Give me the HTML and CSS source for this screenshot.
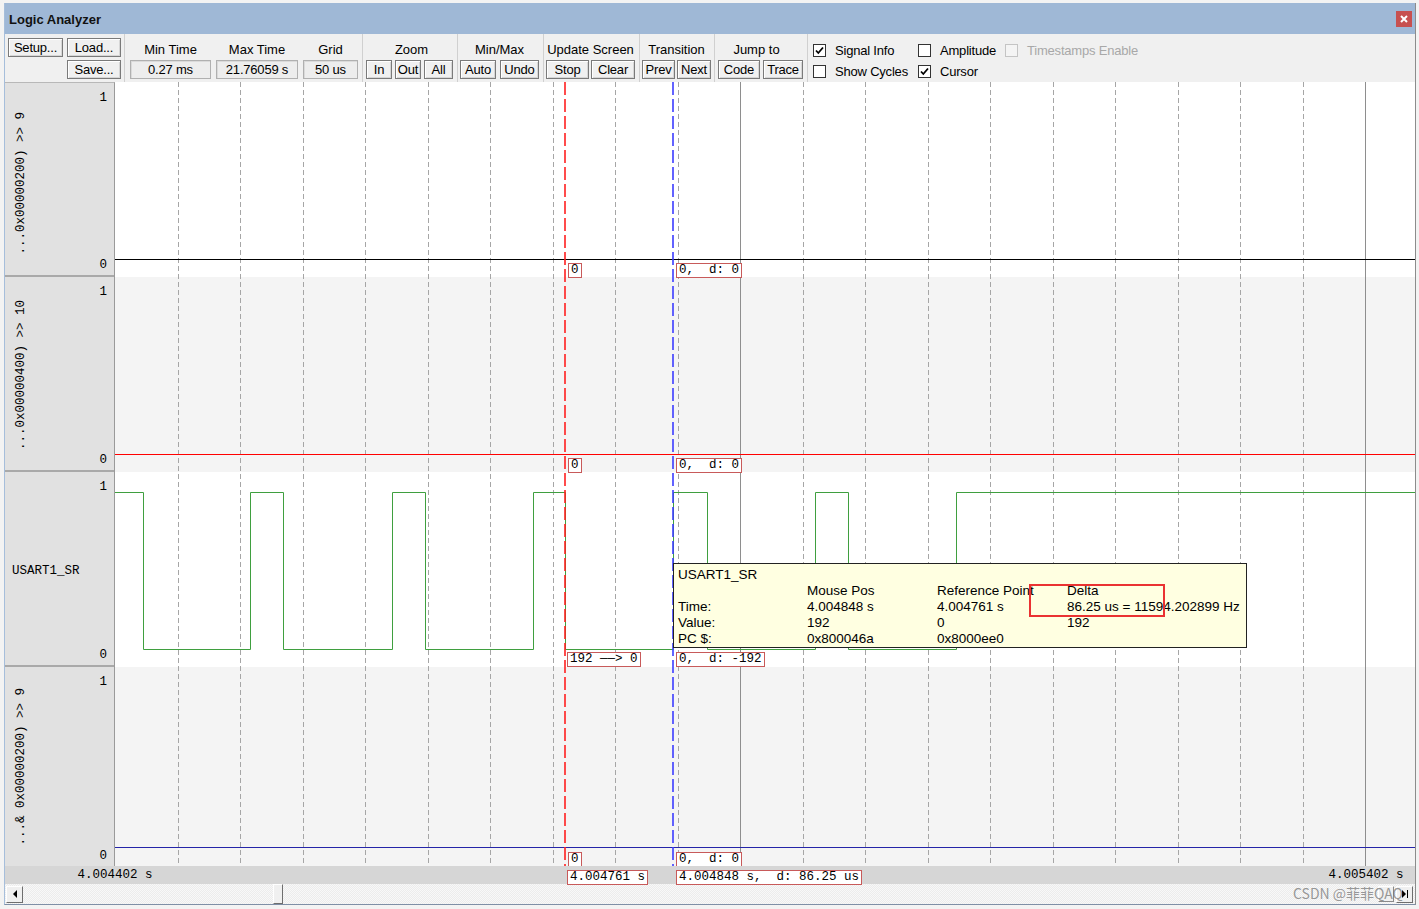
FILE: index.html
```html
<!DOCTYPE html>
<html lang="en">
<head>
<meta charset="utf-8">
<title>Logic Analyzer</title>
<link rel="stylesheet" href="styles.css">
</head>
<body>
<div class="window">
  <div class="titlebar">
    <span class="title">Logic Analyzer</span>
    <span class="close"><svg width="8" height="8" viewBox="0 0 8 8"><path d="M1 1L7 7M7 1L1 7" stroke="#fff" stroke-width="2"/></svg></span>
  </div>

  <div class="toolbar">
    <div class="grp g1">
      <div class="brow gap4"><span class="btn b-setup">Setup...</span><span class="btn b-load">Load...</span></div>
      <div class="brow save-row"><span class="btn b-load">Save...</span></div>
    </div>
    <div class="grp g2">
      <div class="field"><span class="lbl">Min Time</span><span class="val v-min">0.27 ms</span></div>
      <div class="field"><span class="lbl">Max Time</span><span class="val v-max">21.76059 s</span></div>
      <div class="field"><span class="lbl">Grid</span><span class="val v-grid">50 us</span></div>
    </div>
    <div class="grp g3">
      <div class="stack"><span class="lbl zoom-lbl">Zoom</span>
        <div class="brow gap3"><span class="btn b-in">In</span><span class="btn b-out">Out</span><span class="btn b-all">All</span></div>
      </div>
    </div>
    <div class="grp g4">
      <div class="stack"><span class="lbl">Min/Max</span>
        <div class="brow gap4"><span class="btn b-auto">Auto</span><span class="btn b-undo">Undo</span></div>
      </div>
    </div>
    <div class="grp g5">
      <div class="stack"><span class="lbl">Update Screen</span>
        <div class="brow gap2"><span class="btn b-stop">Stop</span><span class="btn b-clear">Clear</span></div>
      </div>
    </div>
    <div class="grp g6">
      <div class="stack"><span class="lbl">Transition</span>
        <div class="brow gap2"><span class="btn b-prev">Prev</span><span class="btn b-next">Next</span></div>
      </div>
    </div>
    <div class="grp g7">
      <div class="stack"><span class="lbl jump-lbl">Jump to</span>
        <div class="brow gap3"><span class="btn b-code">Code</span><span class="btn b-trace">Trace</span></div>
      </div>
    </div>
    <div class="checks">
      <label class="chk"><span class="box on"><svg width="11" height="11" viewBox="0 0 11 11"><path d="M2 5.5L4.3 8L9 2.5" stroke="#000" stroke-width="1.8" fill="none"/></svg></span>Signal Info</label>
      <label class="chk"><span class="box"></span>Amplitude</label>
      <label class="chk disabled"><span class="box"></span>Timestamps Enable</label>
      <label class="chk"><span class="box"></span>Show Cycles</label>
      <label class="chk"><span class="box on"><svg width="11" height="11" viewBox="0 0 11 11"><path d="M2 5.5L4.3 8L9 2.5" stroke="#000" stroke-width="1.8" fill="none"/></svg></span>Cursor</label>
    </div>
  </div>

  <div class="main">
    <div class="labels">
      <div class="lrow">
        <div class="lname"><span class="vname">...0x00000200) &gt;&gt; 9</span></div>
        <div class="lscale"><span>1</span><span>0</span></div>
      </div>
      <div class="lrow">
        <div class="lname"><span class="vname">...0x00000400) &gt;&gt; 10</span></div>
        <div class="lscale"><span>1</span><span>0</span></div>
      </div>
      <div class="lrow">
        <div class="lname mid"><span class="hname">USART1_SR</span></div>
        <div class="lscale"><span>1</span><span>0</span></div>
      </div>
      <div class="lrow last">
        <div class="lname"><span class="vname">...&amp; 0x00000200) &gt;&gt; 9</span></div>
        <div class="lscale"><span>1</span><span>0</span></div>
      </div>
    </div>

    <div class="plot">
      <svg class="wave" width="1300" height="784" viewBox="0 0 1300 784">
        <rect x="0" y="195" width="1300" height="195" fill="#f4f4f4"/>
        <rect x="0" y="585" width="1300" height="199" fill="#f4f4f4"/>
        <path d="M63.5 0V784M125.5 0V784M188.5 0V784M250.5 0V784M313.5 0V784M375.5 0V784M438.5 0V784M500.5 0V784M563.5 0V784M688.5 0V784M750.5 0V784M813.5 0V784M875.5 0V784M938.5 0V784M1000.5 0V784M1063.5 0V784M1125.5 0V784M1188.5 0V784" stroke="#a6a6a6" stroke-dasharray="5 3" fill="none"/>
        <path d="M625.5 0V784M1250.5 0V784" stroke="#8e8e8e" fill="none"/>
        <path d="M0 177.5H1300" stroke="#000" fill="none"/>
        <path d="M0 372.5H1300" stroke="#ff0000" fill="none"/>
        <path d="M0 410.5H28.5V567.5H135.5V410.5H168.5V567.5H277.5V410.5H310.5V567.5H418.5V410.5H450.5V567.5H558.5V410.5H592.5V567.5H700.5V410.5H733.5V567.5H841.5V410.5H1300" stroke="#3f9f3f" fill="none"/>
        <path d="M0 765.5H1300" stroke="#2424a8" fill="none"/>
        <path d="M450 0V784" stroke="#ff2020" stroke-width="1.6" stroke-dasharray="13 4" fill="none"/>
        <path d="M558 0V784" stroke="#3c3cff" stroke-width="1.6" stroke-dasharray="13 4" fill="none"/>
      </svg>

      <span class="mk m-ref r1">0</span><span class="mk m-cur r1">0,  d: 0</span>
      <span class="mk m-ref r2">0</span><span class="mk m-cur r2">0,  d: 0</span>
      <span class="mk m-ref3 r3">192 ——&gt; 0</span><span class="mk m-cur r3">0,  d: -192</span>
      <span class="mk m-ref r4">0</span><span class="mk m-cur r4">0,  d: 0</span>

      <div class="tip">
        <div class="tip-title">USART1_SR</div>
        <div class="tip-grid">
          <span></span><span>Mouse Pos</span><span>Reference Point</span><span>Delta</span>
          <span>Time:</span><span>4.004848 s</span><span>4.004761 s</span><span>86.25 us = 11594.202899 Hz</span>
          <span>Value:</span><span>192</span><span>0</span><span>192</span>
          <span>PC $:</span><span>0x800046a</span><span>0x8000ee0</span><span></span>
        </div>
        <div class="tip-mark"></div>
      </div>
    </div>
  </div>

  <div class="axis">
    <span class="tlabel t-start">4.004402 s</span>
    <span class="mk a-ref">4.004761 s</span>
    <span class="mk a-cur">4.004848 s,  d: 86.25 us</span>
    <span class="tlabel t-end">4.005402 s</span>
  </div>

  <div class="scroll">
    <span class="sb-btn"><svg width="6" height="8" viewBox="0 0 6 8"><path d="M5 0V8L1 4Z" fill="#000"/></svg></span>
    <span class="sb-thumb"></span>
    <span class="sb-end">
      <span class="sb-grip"></span>
      <span class="sb-btn"><svg width="8" height="8" viewBox="0 0 8 8"><path d="M1 0V8L5 4Z M6 0H7V8H6Z" fill="#000"/></svg></span>
    </span>
    <span class="watermark">CSDN @菲菲QAQ</span>
  </div>
</div>
</body>
</html>
```

FILE: styles.css
```css
* { box-sizing: border-box; }
html, body { margin: 0; padding: 0; }
body {
  width: 1419px;
  height: 909px;
  overflow: hidden;
  background: #f3f3f3;
  font-family: "Liberation Sans", Arial, sans-serif;
  color: #000;
}

.window {
  margin: 3px 0 0 4px;
  width: 1412px;
  border-left: 1px solid #a6bedb;
  border-right: 1px solid #8c8c8c;
  border-bottom: 1px solid #7f8fa6;
  background: #f0f0f0;
}

/* title bar */
.titlebar {
  height: 31px;
  background: #9fb8d6;
  display: flex;
  align-items: center;
  justify-content: space-between;
  padding: 2px 3px 0 4px;
}
.title { font-weight: bold; font-size: 13px; color: #111; }
.close {
  width: 16px;
  height: 16px;
  margin-top: -2px;
  background: #c75050;
  display: flex;
  align-items: center;
  justify-content: center;
}

/* toolbar */
.toolbar {
  height: 48px;
  display: flex;
  background: #f0f0f0;
  font-size: 13px;
}
.grp {
  height: 48px;
  border-right: 1px solid #d0d0d0;
  padding-top: 4px;
  display: flex;
  flex-direction: column;
  gap: 3px;
}
.g1 { width: 120px; padding-left: 3px; }
.g2 { width: 238px; padding-left: 5px; flex-direction: row; gap: 5px; }
.g3 { width: 95px; padding-left: 3px; }
.g4 { width: 86px; padding-left: 2px; }
.g5 { width: 96px; padding-left: 2px; }
.g6 { width: 75px; padding-left: 2px; }
.g7 { width: 93px; padding-left: 3px; }

.stack { display: inline-flex; flex-direction: column; align-items: center; gap: 3px; align-self: flex-start; }
.brow { display: flex; }
.gap2 { gap: 2px; }
.gap3 { gap: 3px; }
.gap4 { gap: 4px; }
.save-row { padding-left: 59px; }

.lbl { height: 19px; line-height: 23px; white-space: nowrap; }
.zoom-lbl { padding-left: 4px; }
.jump-lbl { padding-right: 8px; }

.btn {
  height: 19px;
  display: flex;
  align-items: center;
  justify-content: center;
  border: 1px solid #7a7a7a;
  background: #f0f0f0;
  box-shadow: inset 1px 1px 0 #ffffff, inset -1px -1px 0 #d6d6d6;
  white-space: nowrap;
  letter-spacing: -0.2px;
}
.b-setup { width: 55px; }
.b-load { width: 54px; }
.b-in { width: 26px; }
.b-out { width: 26px; }
.b-all { width: 29px; }
.b-auto { width: 36px; }
.b-undo { width: 39px; }
.b-stop { width: 43px; }
.b-clear { width: 44px; }
.b-prev { width: 33px; }
.b-next { width: 34px; }
.b-code { width: 42px; }
.b-trace { width: 40px; }

.field { display: flex; flex-direction: column; align-items: center; gap: 3px; }
.val {
  height: 19px;
  display: flex;
  align-items: center;
  justify-content: center;
  border: 1px solid #b0b0b0;
  background: #ededed;
  box-shadow: inset 1px 1px 0 #dadada;
  white-space: nowrap;
  letter-spacing: -0.2px;
}
.v-min { width: 81px; }
.v-max { width: 82px; }
.v-grid { width: 55px; }

.checks {
  flex: 1;
  display: grid;
  grid-template-columns: 105px 87px auto;
  grid-template-rows: 21px 21px;
  padding: 6px 0 0 5px;
}
.chk { display: flex; align-items: center; gap: 9px; white-space: nowrap; letter-spacing: -0.2px; }
.box {
  width: 13px;
  height: 13px;
  border: 1px solid #333;
  background: #fff;
  display: flex;
  align-items: center;
  justify-content: center;
}
.chk.disabled { color: #a8a8a8; }
.chk.disabled .box { border-color: #c4c4c4; background: #f4f4f4; }

/* main plot region */
.main { display: flex; height: 784px; }
.labels {
  width: 110px;
  flex: none;
  display: flex;
  flex-direction: column;
  background: #e1e1e1;
  border-right: 1px solid #9a9a9a;
  border-top: 1px solid #b8b8b8;
  font-family: "Liberation Mono", "DejaVu Sans Mono", monospace;
  font-size: 12.5px;
}
.lrow { height: 195px; display: flex; border-bottom: 2px solid #a9a9a9; flex: none; }
.lrow:first-child { height: 194px; }
.lrow.last { height: 199px; border-bottom: 0; }
.lname { flex: 1; display: flex; align-items: flex-end; padding: 0 0 20px 10px; }
.lname.mid { align-items: center; padding: 5px 0 0 7px; }
.vname {
  writing-mode: vertical-rl;
  transform: rotate(180deg);
  line-height: 12px;
  white-space: nowrap;
}
.hname { white-space: nowrap; }
.lscale {
  display: flex;
  flex-direction: column;
  justify-content: space-between;
  align-items: flex-end;
  padding: 8px 7px 3px 0;
  line-height: 14px;
}

.plot { position: relative; width: 1300px; height: 784px; background: #fff; }
.wave { display: block; }

.mk {
  position: absolute;
  height: 15px;
  padding: 0 2px;
  border: 1px solid #c85a5a;
  background: #fff;
  font-family: "Liberation Mono", "DejaVu Sans Mono", monospace;
  font-size: 12.5px;
  line-height: 13px;
  white-space: pre;
  color: #000;
}
.m-ref { left: 453px; }
.m-ref3 { left: 452px; }
.m-cur { left: 561px; }
.r1 { top: 181px; }
.r2 { top: 376px; }
.r3 { top: 570px; }
.r4 { top: 770px; }

.tip {
  position: absolute;
  left: 558px;
  top: 481px;
  width: 574px;
  height: 85px;
  background: #ffffe1;
  border: 1px solid #222;
  padding: 3px 0 0 4px;
  font-size: 13.5px;
  line-height: 16px;
  white-space: nowrap;
}
.tip-title { height: 16px; }
.tip-grid { display: grid; grid-template-columns: 129px 130px 130px auto; }
.tip-mark {
  position: absolute;
  left: 355px;
  top: 20px;
  width: 136px;
  height: 33px;
  border: 2px solid #ea3232;
}

/* time axis */
.axis {
  position: relative;
  height: 18px;
  background: #d6d6d6;
  font-family: "Liberation Mono", "DejaVu Sans Mono", monospace;
  font-size: 12.5px;
}
.tlabel { position: absolute; top: 2px; line-height: 14px; transform: translateX(-50%); white-space: nowrap; }
.t-start { left: 110px; }
.t-end { left: 1361px; }
.axis .mk { top: 4px; z-index: 2; }
.a-ref { left: 562px; }
.a-cur { left: 671px; }

/* scrollbar */
.scroll {
  position: relative;
  height: 20px;
  display: flex;
  align-items: center;
  padding: 0 2px 0 1px;
  background: repeating-conic-gradient(#f8f8f8 0 25%, #ececec 0 50%) 0 0 / 2px 2px;
}
.sb-btn {
  width: 17px;
  height: 17px;
  display: flex;
  align-items: center;
  justify-content: center;
  background: #f0f0f0;
  border: 1px solid;
  border-color: #fff #6e6e6e #6e6e6e #fff;
}
.sb-thumb {
  position: absolute;
  left: 268px;
  top: 0;
  width: 10px;
  height: 20px;
  background: #f0f0f0;
  border: 1px solid;
  border-color: #fff #6e6e6e #6e6e6e #fff;
}
.sb-end { margin-left: auto; display: flex; align-items: center; gap: 2px; }
.sb-grip {
  width: 16px;
  height: 16px;
  border: 1px solid;
  border-color: #fff #8a8a8a #8a8a8a #fff;
  background: #f0f0f0;
}
.watermark {
  position: absolute;
  right: 12px;
  top: 0;
  line-height: 18px;
  font-family: "Noto Sans CJK SC", "Liberation Sans", sans-serif;
  font-size: 14px;
  color: rgba(110, 110, 110, 0.7);
  white-space: nowrap;
}
```
